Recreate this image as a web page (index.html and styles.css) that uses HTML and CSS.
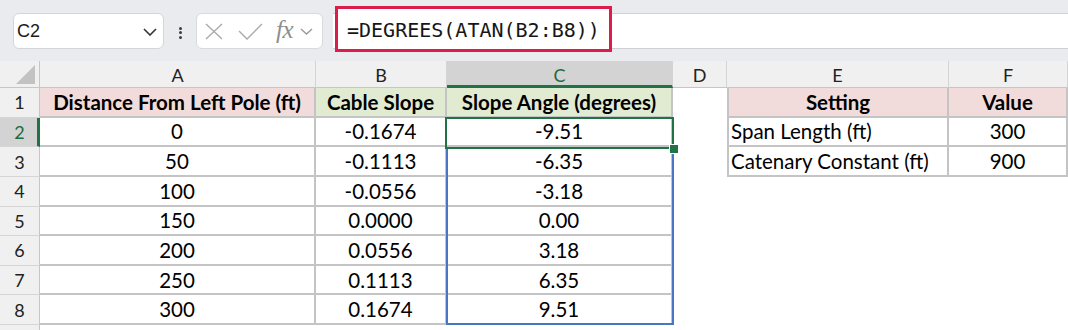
FILE: index.html
```html
<!DOCTYPE html>
<html>
<head>
<meta charset="utf-8">
<link rel="stylesheet" href="styles.css">
</head>
<body>
<div class="toolbar">
  <div class="namebox">
    <span class="ref">C2</span>
    <svg class="chev" width="14" height="8" viewBox="0 0 14 8"><path d="M1 1 L7 7 L13 1" fill="none" stroke="#333" stroke-width="1.6"/></svg>
  </div>
  <div class="dots"><i></i><i></i><i></i></div>
  <div class="fxbox">
    <svg class="ico-x" width="18" height="17" viewBox="0 0 18 17"><path d="M1 1 L17 16 M17 1 L1 16" fill="none" stroke="#ababab" stroke-width="1.4"/></svg>
    <svg class="ico-ok" width="25" height="17" viewBox="0 0 25 17"><path d="M1 8 L9 16 L24 1" fill="none" stroke="#ababab" stroke-width="1.4"/></svg>
    <span class="fx">fx</span>
    <svg class="chev2" width="13" height="7" viewBox="0 0 13 7"><path d="M1 1 L6.5 6 L12 1" fill="none" stroke="#9a9a9a" stroke-width="1.4"/></svg>
  </div>
  <div class="formula"><div class="hl">=DEGREES(ATAN(B2:B8))</div></div>
</div>

<div class="sheetwrap">
<div class="sheet">
  <div class="corner"><span class="tri"></span></div>
  <div class="ch">A</div><div class="ch">B</div><div class="ch sel">C</div><div class="ch">D</div><div class="ch">E</div><div class="ch">F</div>

  <div class="rh">1</div>
  <div class="c g pink b">Distance From Left Pole (ft)</div>
  <div class="c g green b">Cable Slope</div>
  <div class="c g green b">Slope Angle (degrees)</div>
  <div class="c"></div>
  <div class="c t tl pink b">Setting</div>
  <div class="c t pink b">Value</div>

  <div class="rh sel">2</div>
  <div class="c g">0</div><div class="c g">-0.1674</div><div class="c g">-9.51</div><div class="c"></div>
  <div class="c t tl l">Span Length (ft)</div><div class="c t">300</div>

  <div class="rh">3</div>
  <div class="c g">50</div><div class="c g">-0.1113</div><div class="c g">-6.35</div><div class="c"></div>
  <div class="c t tl l">Catenary Constant (ft)</div><div class="c t">900</div>

  <div class="rh">4</div>
  <div class="c g">100</div><div class="c g">-0.0556</div><div class="c g">-3.18</div><div class="c"></div><div class="c"></div><div class="c"></div>

  <div class="rh">5</div>
  <div class="c g">150</div><div class="c g">0.0000</div><div class="c g">0.00</div><div class="c"></div><div class="c"></div><div class="c"></div>

  <div class="rh">6</div>
  <div class="c g">200</div><div class="c g">0.0556</div><div class="c g">3.18</div><div class="c"></div><div class="c"></div><div class="c"></div>

  <div class="rh">7</div>
  <div class="c g">250</div><div class="c g">0.1113</div><div class="c g">6.35</div><div class="c"></div><div class="c"></div><div class="c"></div>

  <div class="rh">8</div>
  <div class="c g">300</div><div class="c g">0.1674</div><div class="c g">9.51</div><div class="c"></div><div class="c"></div><div class="c"></div>

  <div class="rh last"></div>
</div>
<div class="overlay">
  <div class="spill"></div>
  <div class="selbox"><span class="handle"></span></div>
</div>
</div>
</body>
</html>
```
FILE: styles.css
```css
* { box-sizing: border-box; margin: 0; padding: 0; }
body {
  width: 1068px;
  height: 330px;
  overflow: hidden;
  background: #ffffff;
  font-family: Lato, "Open Sans", sans-serif;
}

/* ---------- formula bar ---------- */
.toolbar {
  display: flex;
  align-items: flex-start;
  height: 61px;
  background: #e9ebee;
  padding: 13px 0 0 13px;
}
.namebox {
  width: 151px;
  height: 36px;
  background: #fff;
  border: 1px solid #d3d5d8;
  border-radius: 6px;
  display: flex;
  align-items: center;
  justify-content: space-between;
  padding: 1px 6px 0 3px;
  font: 18px "Liberation Sans", Arial, sans-serif;
  color: #1a1a1a;
}
.chev { margin-top: 1px; }
.dots {
  width: 32px;
  height: 36px;
  display: flex;
  flex-direction: column;
  align-items: center;
  justify-content: center;
  gap: 1.5px;
  padding-top: 3px;
}
.dots i {
  display: block;
  width: 3px;
  height: 3px;
  border-radius: 50%;
  background: #3c3c3c;
}
.fxbox {
  width: 127px;
  height: 36px;
  background: #fff;
  border: 1px solid #d8dadd;
  border-radius: 6px;
  display: flex;
  align-items: center;
  padding-left: 8px;
}
.ico-ok { margin-left: 15px; }
.fx {
  margin-left: 13px;
  font: italic 25px "Liberation Serif", serif;
  color: #8e8e8e;
  letter-spacing: -0.5px;
  margin-top: -3px;
}
.chev2 { margin-left: 7px; }
.formula {
  flex: 1;
  height: 36px;
  margin-left: 10px;
  background: #fff;
  border-top: 1px solid #cfd1d4;
  border-bottom: 1px solid #cfd1d4;
  padding-left: 2px;
}
.hl {
  display: flex;
  align-items: center;
  width: 277px;
  height: 46px;
  margin-top: -8px;
  border: 3px solid #dc1d4b;
  padding: 1px 0 0 9px;
  font: 20px "DejaVu Sans Mono", monospace;
  color: #161616;
  background: #fff;
}

/* ---------- sheet grid ---------- */
.sheetwrap {
  display: grid;
  height: 269px;
}
.sheet, .overlay {
  grid-area: 1 / 1;
  display: grid;
  grid-template-columns: 40px 276px 131px 226px 54px 222px 1fr;
  grid-template-rows: 27px repeat(8, 29.625px) 1fr;
  height: 269px;
}
.sheet {
  font-size: 20.5px;
  color: #000;
}
.overlay {
  pointer-events: none;
  z-index: 2;
}
.corner {
  background: #f0f0f0;
  border-right: 1px solid #c6c6c6;
  border-bottom: 1px solid #c6c6c6;
  display: flex;
  align-items: flex-end;
  justify-content: flex-end;
  padding: 0 4px 3px 0;
}
.tri {
  width: 19px;
  height: 19px;
  background: #c2c2c2;
  clip-path: polygon(100% 0, 100% 100%, 0 100%);
}
.ch {
  background: #f0f0f0;
  border-right: 1px solid #d4d4d4;
  border-bottom: 1px solid #c6c6c6;
  display: flex;
  align-items: center;
  justify-content: center;
  font-size: 18px;
  color: #222;
  padding-top: 2px;
}
.ch.sel {
  background: #d3d3d3;
  color: #1d6b40;
  border-bottom: 3px solid #217346;
  padding-top: 4px;
}
.rh {
  background: #f0f0f0;
  border-right: 1px solid #c6c6c6;
  border-bottom: 1px solid #d6d6d6;
  display: flex;
  align-items: center;
  justify-content: center;
  font-size: 18px;
  color: #222;
}
.rh.sel {
  background: #d3d3d3;
  color: #1d6b40;
  border-right: 3px solid #217346;
  padding-left: 2px;
}
.rh.last { border-bottom: none; }

.c {
  display: flex;
  align-items: center;
  justify-content: center;
  white-space: nowrap;
  overflow: hidden;
  background: #fff;
}
.g {
  border-right: 2px solid #c4c4c4;
  border-bottom: 2px solid #c4c4c4;
}
.t {
  border-right: 2px solid #c4c4c4;
  border-bottom: 2px solid #c4c4c4;
}
.tl { border-left: 2px solid #c4c4c4; }
.l { justify-content: flex-start; padding-left: 2px; }
.b { font-weight: 700; }
.pink { background: #f2dcdb; }
.green { background: #e1ebd1; }

/* ---------- selection overlays ---------- */
.spill {
  grid-column: 4;
  grid-row: 4 / 10;
  margin: 0 -1px 0 -1px;
  border: 2px solid #4a74c4;
  border-top: none;
}
.selbox {
  grid-column: 4;
  grid-row: 3;
  margin: -1px -1px -2px -2px;
  border: 2.5px solid #217346;
  position: relative;
}
.handle {
  position: absolute;
  right: -6px;
  bottom: -6px;
  width: 8px;
  height: 8px;
  background: #217346;
  outline: 1px solid #fff;
}
```
